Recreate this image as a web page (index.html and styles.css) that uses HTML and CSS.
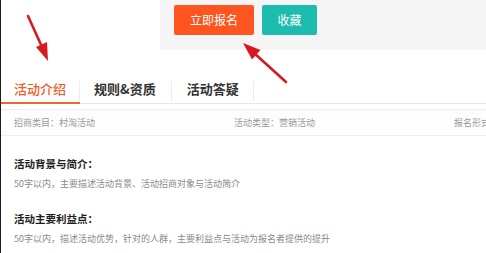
FILE: index.html
```html
<!DOCTYPE html>
<html lang="zh">
<head>
<meta charset="utf-8">
<link rel="stylesheet" href="styles.css">
</head>
<body>
<div class="page">
  <div class="top">
    <div class="actions">
      <button class="btn btn-apply">立即报名</button>
      <button class="btn btn-fav">收藏</button>
    </div>
  </div>
  <div class="tabs">
    <div class="tab active"><span>活动介绍</span></div>
    <div class="tab"><span>规则&amp;资质</span></div>
    <div class="tab"><span>活动答疑</span></div>
  </div>
  <div class="info">
    <div class="cell">招商类目：村淘活动</div>
    <div class="cell">活动类型：营销活动</div>
    <div class="cell">报名形式：</div>
  </div>
  <div class="section">
    <h3 class="title">活动背景与简介：</h3>
    <p class="desc">50字以内，主要描述活动背景、活动招商对象与活动简介</p>
  </div>
  <div class="section">
    <h3 class="title">活动主要利益点：</h3>
    <p class="desc">50字以内，描述活动优势，针对的人群，主要利益点与活动为报名者提供的提升</p>
  </div>
  <svg class="arrows" width="486" height="253" viewBox="0 0 486 253">
    <line x1="28" y1="16" x2="42" y2="47" stroke="#d71920" stroke-width="2.6" stroke-linecap="round"/>
    <polygon points="48,61 47,42 36,47" fill="#d71920"/>
    <line x1="286" y1="82" x2="254" y2="53" stroke="#d71920" stroke-width="2.6" stroke-linecap="round"/>
    <polygon points="243,43 260.5,50 252,59.5" fill="#d71920"/>
  </svg>
</div>
</body>
</html>
```

FILE: styles.css
```css
* { box-sizing: border-box; }
html, body {
  margin: 0;
  padding: 0;
  background: #fff;
}
body {
  font-family: "Noto Sans CJK SC", "Liberation Sans", sans-serif;
  width: 486px;
  height: 253px;
  overflow: hidden;
}
.page {
  position: relative;
  width: 486px;
  height: 253px;
  border-left: 1px solid #1c1c1c;
  overflow: hidden;
}
.top {
  height: 50px;
  display: flex;
}
.actions {
  margin-left: 159px;
  flex: 1;
  background: #f5f5f5;
  display: flex;
  gap: 8px;
  padding: 5px 0 0 14px;
  align-items: flex-start;
}
.btn {
  border: none;
  height: 30px;
  border-radius: 2px;
  color: #fff;
  font-family: inherit;
  font-size: 12px;
  line-height: 30px;
  padding: 0;
  margin: 0;
}
.btn-apply {
  width: 80px;
  background: #fd5420;
}
.btn-fav {
  width: 55px;
  background: #1dbcae;
}
.tabs {
  margin-top: 25px;
  height: 29px;
  display: flex;
  border-bottom: 1px solid #e6e6e6;
}
.tab {
  position: relative;
  padding: 0 15px;
  font-size: 13px;
  font-weight: bold;
  color: #333;
  line-height: 28px;
  height: 29px;
}
.tab.active { padding: 0 14px 0 13px; }
.tab:nth-child(2) { padding-left: 14px; padding-right: 16px; }
.tab:nth-child(3) { padding-left: 15px; padding-right: 15px; }
.tab::after {
  content: "";
  position: absolute;
  right: 0;
  top: 6px;
  height: 20px;
  width: 1px;
  background: #ececec;
}
.tab.active {
  color: #f25a24;
  font-weight: 500;
  border-bottom: 2px solid #f0672d;
}
.info {
  margin-top: 5px;
  height: 27px;
  border-top: 1px solid #eee;
  border-bottom: 1px solid #eee;
  background: #fdfdfd;
  display: grid;
  grid-template-columns: 220px 220px 220px;
  padding-left: 13px;
  align-items: center;
}
.cell {
  font-size: 9px;
  color: #9a9a9a;
  white-space: nowrap;
}
.section {
  padding-left: 13px;
}
.title {
  margin: 0;
  font-size: 10.5px;
  font-weight: bold;
  color: #1e1e1e;
  line-height: 14px;
}
.desc {
  margin: 6px 0 0;
  font-size: 9px;
  color: #8a8a8a;
  line-height: 14px;
}
.info + .section { margin-top: 21px; }
.section + .section { margin-top: 21px; }
.arrows {
  position: absolute;
  left: -1px;
  top: 0;
  pointer-events: none;
}
```
